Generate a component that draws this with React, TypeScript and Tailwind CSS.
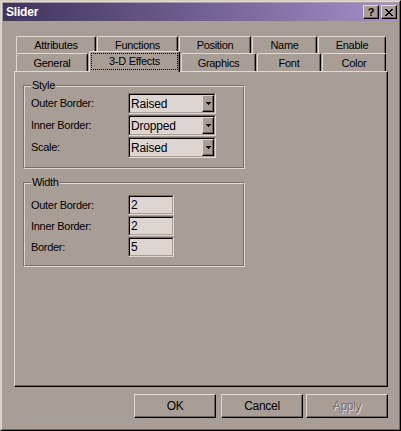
import React from "react";

const FACE = "bg-[#a99e96]";

function Tab({ label, w }: { label: string; w: string }) {
  return (
    <div
      className={`${w} h-full flex items-center justify-center border-l border-t border-r border-l-[#e2dad4] border-t-[#e2dad4] border-r-black rounded-tl-[2px] rounded-tr-[2px] shadow-[inset_-1px_0_#6f655f] pt-[1px]`}
    >
      {label}
    </div>
  );
}

function Combo({ value }: { value: string }) {
  return (
    <div className="w-[88px] h-[21px] border border-t-[#7a6e68] border-l-[#7a6e68] border-r-[#e2dad4] border-b-[#e2dad4]">
      <div className="h-full border border-t-black border-l-black border-r-[#a99e96] border-b-[#a99e96] bg-[#dcd5d0] flex items-center">
        <span className="flex-1 pl-[1px] text-[12px] leading-none tracking-[-0.2px]">{value}</span>
        <div className="w-[12px] h-full bg-[#a99e96] border border-t-[#e2dad4] border-l-[#e2dad4] border-r-black border-b-black shadow-[inset_-1px_-1px_#6f655f] flex items-center justify-center">
          <svg width="5" height="3" viewBox="0 0 5 3">
            <path d="M0 0h5v1H0zM1 1h3v1H1zM2 2h1v1H2z" fill="#000" />
          </svg>
        </div>
      </div>
    </div>
  );
}

function TextBox({ value }: { value: string }) {
  return (
    <div className="w-[46px] h-[20px] border border-t-[#7a6e68] border-l-[#7a6e68] border-r-[#e2dad4] border-b-[#e2dad4]">
      <div className="h-full border border-t-black border-l-black border-r-[#a99e96] border-b-[#a99e96] bg-[#dcd5d0] flex items-center pl-[1px] text-[12px] leading-none">
        {value}
      </div>
    </div>
  );
}

function Group({
  title,
  children,
  className,
}: {
  title: string;
  children: React.ReactNode;
  className?: string;
}) {
  return (
    <div
      className={`relative w-[222px] border border-t-[#7a6e68] border-l-[#7a6e68] border-r-[#e2dad4] border-b-[#e2dad4] ${className ?? ""}`}
    >
      <span className={`absolute left-[7px] -top-[7px] px-[1px] ${FACE} leading-[13px]`}>{title}</span>
      <div className="border border-t-[#e2dad4] border-l-[#e2dad4] border-r-[#7a6e68] border-b-[#7a6e68]">
        {children}
      </div>
    </div>
  );
}

function Btn({ label, disabled, className }: { label: string; disabled?: boolean; className?: string }) {
  return (
    <div
      className={`w-[82px] h-[24px] border border-t-[#e2dad4] border-l-[#e2dad4] border-r-black border-b-black shadow-[inset_-1px_-1px_#6f655f] flex items-center justify-center ${className ?? ""}`}
    >
      <span
        className={
          disabled
            ? "text-[#7a6e68] [text-shadow:1px_1px_0_#e2dad4]"
            : "text-black"
        }
      >
        {label}
      </span>
    </div>
  );
}

export default function App() {
  return (
    <div
      className={`w-[401px] h-[431px] ${FACE} border border-t-[#d4ccc6] border-l-[#d4ccc6] border-r-black border-b-black font-['Liberation_Sans',Arial,sans-serif] text-[11px] tracking-[-0.3px] text-black`}
    >
      <div className="h-full border border-t-[#e2dad4] border-l-[#e2dad4] border-r-[#6f655f] border-b-[#6f655f] p-px flex flex-col">
        {/* Title bar */}
        <div className="h-[18px] bg-gradient-to-r from-[#40345e] to-[#a690ca] flex items-center pl-[3px] pr-[1px]">
          <span className="flex-1 text-white font-bold text-[12px] tracking-[-0.2px] leading-none">Slider</span>
          <div className="flex gap-[2px]">
            <div className="w-[16px] h-[14px] bg-[#a99e96] border border-t-[#e2dad4] border-l-[#e2dad4] border-r-black border-b-black shadow-[inset_-1px_-1px_#6f655f] flex items-center justify-center text-[11px] font-bold leading-none tracking-normal">
              ?
            </div>
            <div className="w-[16px] h-[14px] bg-[#a99e96] border border-t-[#e2dad4] border-l-[#e2dad4] border-r-black border-b-black shadow-[inset_-1px_-1px_#6f655f] flex items-center justify-center">
              <svg width="8" height="7" viewBox="0 0 8 7" shapeRendering="crispEdges">
                <path
                  d="M0 0h2v1H0zM1 1h2v1H1zM2 2h2v1H2zM3 3h2v1H3zM2 4h2v1H2zM1 5h2v1H1zM0 6h2v1H0zM6 0h2v1H6zM5 1h2v1H5zM4 2h2v1H4zM4 4h2v1H4zM5 5h2v1H5zM6 6h2v1H6z"
                  fill="#000"
                />
              </svg>
            </div>
          </div>
        </div>

        {/* Tabs + panel */}
        <div className="mt-[15px] ml-[11px] w-[374px]">
          <div className="pl-[2px]">
            <div className="flex h-[17px] gap-[1px]">
              <Tab label="Attributes" w="w-[80px]" />
              <Tab label="Functions" w="w-[81px]" />
              <Tab label="Position" w="w-[72px]" />
              <Tab label="Name" w="w-[65px]" />
              <Tab label="Enable" w="w-[68px]" />
            </div>
            <div className="flex h-[18px] gap-[1px] items-start">
              <Tab label="General" w="w-[72px]" />
              <div className={`relative z-10 w-[91px] h-[21px] -mt-[2px] ${FACE} border-l border-t border-r border-l-[#e2dad4] border-t-[#e2dad4] border-r-black rounded-tl-[2px] rounded-tr-[2px] shadow-[inset_-1px_0_#6f655f] pt-[1px] px-[1px]`}>
                <div className="h-[17px] border border-dotted border-black flex items-center justify-center">
                  3-D Effects
                </div>
              </div>
              <Tab label="Graphics" w="w-[75px]" />
              <Tab label="Font" w="w-[64px]" />
              <Tab label="Color" w="w-[64px]" />
            </div>
          </div>
          <div className="h-[316px] border border-t-[#e2dad4] border-l-[#e2dad4] border-r-black border-b-black shadow-[inset_-1px_-1px_#6f655f] pl-[8px] pt-[13px]">
            <Group title="Style">
              <div className="pl-[6px] pt-[6px] pb-[8px] flex flex-col">
                {[
                  ["Outer Border:", "Raised"],
                  ["Inner Border:", "Dropped"],
                  ["Scale:", "Raised"],
                ].map(([l, v]) => (
                  <div key={l} className="h-[22px] flex items-start">
                    <span className="w-[97px] h-[21px] flex items-center">{l}</span>
                    <Combo value={v} />
                  </div>
                ))}
              </div>
            </Group>
            <Group title="Width" className="mt-[13px]">
              <div className="pl-[6px] pt-[11px] pb-[8px] flex flex-col gap-[1px]">
                {[
                  ["Outer Border:", "2"],
                  ["Inner Border:", "2"],
                  ["Border:", "5"],
                ].map(([l, v]) => (
                  <div key={l} className="h-[20px] flex items-center">
                    <span className="w-[97px]">{l}</span>
                    <TextBox value={v} />
                  </div>
                ))}
              </div>
            </Group>
          </div>
        </div>

        {/* Buttons */}
        <div className="mt-[7px] flex pl-[131px] text-[12px]">
          <Btn label="OK" />
          <Btn label="Cancel" className="ml-[5px]" />
          <Btn label="Apply" disabled className="ml-[3px]" />
        </div>
      </div>
    </div>
  );
}
